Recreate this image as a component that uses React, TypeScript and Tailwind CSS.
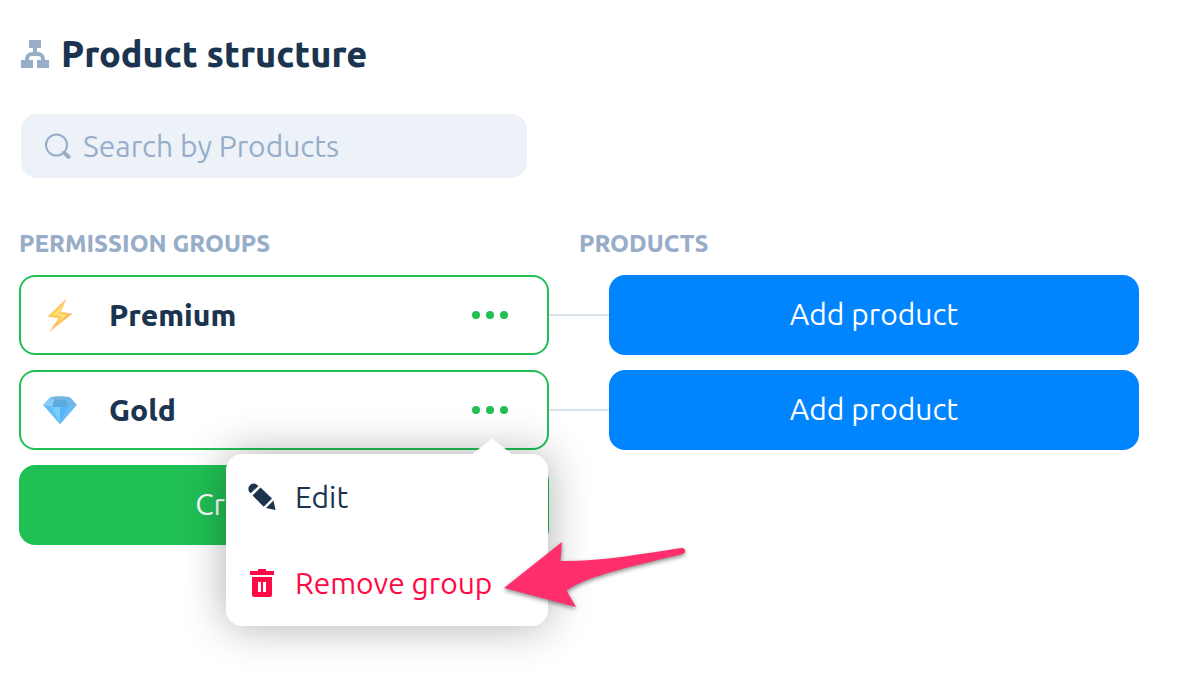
import React from "react";

function StructureIcon() {
  return (
    <svg width="28" height="28" viewBox="0 0 28 28" fill="#97adc8" aria-hidden="true">
      <rect x="8" y="0" width="12" height="8" />
      <rect x="12" y="7" width="4" height="7" />
      <path d="M4 20v-1a7 7 0 0 1 7-7h6a7 7 0 0 1 7 7v1h-4v-1a3 3 0 0 0-3-3h-6a3 3 0 0 0-3 3v1z" />
      <rect x="0" y="20" width="12" height="8" />
      <rect x="16" y="20" width="12" height="8" />
    </svg>
  );
}

function SearchIcon() {
  return (
    <svg width="26" height="26" viewBox="0 0 26 26" fill="none" stroke="#97adc8" strokeLinecap="round" aria-hidden="true">
      <circle cx="11.500" cy="12" r="10.500" strokeWidth="2" />
      <path d="M18 19l2 2" strokeWidth="2" />
      <path d="M20.500 21l3 2.800" strokeWidth="4" />
    </svg>
  );
}

function BoltIcon() {
  return (
    <svg width="36" height="36" viewBox="0 0 36 36" aria-hidden="true">
      <defs>
        <linearGradient id="bolt" x1="0" y1="0" x2="0.6" y2="1">
          <stop offset="0" stopColor="#fcb968" />
          <stop offset="0.45" stopColor="#ffcf45" />
          <stop offset="1" stopColor="#f9a84c" />
        </linearGradient>
      </defs>
      <path d="M24 2L6 19.500l11 1.500L8 34l22-17-11.500-2z" fill="url(#bolt)" stroke="#fcd2a4" strokeWidth="1" strokeLinejoin="round" />
      <path d="M21 8l-10 10 9 1.500-5 7 10-8.500-8-1.500z" fill="#ffe27a" />
    </svg>
  );
}

function DiamondIcon() {
  return (
    <svg width="36" height="36" viewBox="0 0 36 36" aria-hidden="true">
      <path d="M8 5.500q10-2 20 0L34.500 13 18 32 1.500 13z" fill="#62bdf6" stroke="#a8dcf8" strokeLinejoin="round" />
      <path d="M8 5.500q10-2 20 0L24 8H12z" fill="#76b4de" />
      <path d="M12 8h12l2 7H10z" fill="#5aa9e0" />
      <path d="M8 5.500L12 8l-2 7-8.500-2z" fill="#8acbf4" />
      <path d="M28 5.500L24 8l2 7 8.500-2z" fill="#6db6ea" />
      <path d="M1.500 13L10 15l8 17z" fill="#62bdf5" />
      <path d="M10 15h8v17z" fill="#79ccfb" />
      <path d="M18 15h8l-8 17z" fill="#55b5f8" />
      <path d="M26 15l8.500-2L18 32z" fill="#66bdf7" />
    </svg>
  );
}

function PencilIcon() {
  return (
    <svg width="28" height="28" viewBox="0 0 28 28" fill="#1b344f" aria-hidden="true">
      <path d="M2.700 10.300L1.800 9.400A4.900 4.900 0 0 1 1.800 2.400a4.900 4.900 0 0 1 7-.6L10.500 3z" />
      <path d="M12.500 4.500L24 15.500 15.700 23.700 4.500 12.500z" />
      <path d="M25.500 17.500L27.500 27 18 25z" />
    </svg>
  );
}

function TrashIcon() {
  return (
    <svg width="28" height="28" viewBox="0 0 28 28" fill="#ff0a45" aria-hidden="true">
      <path d="M10 0h8v2h8v4H2V2h8z" />
      <path fillRule="evenodd" d="M4 8h20v18a2 2 0 0 1-2 2H6a2 2 0 0 1-2-2zM10 13v10h3V13zM15 13v10h3V13z" />
    </svg>
  );
}

function PointerArrow() {
  return (
    <svg
      className="pointer-events-none absolute top-[86px] left-[276px] overflow-visible drop-shadow-[0_2px_2px_rgba(0,0,0,0.45)]"
      width="184"
      height="70"
      viewBox="0 0 184 70"
      aria-hidden="true"
    >
      <path
        d="M2 48L60 2L58.500 21C95 22 140 14 179 8C184 7.500 184.500 13 180.500 14C140 24 84 36 64.500 50.500L74 67Z"
        fill="#ff2f6d"
      />
    </svg>
  );
}

function GroupMenu() {
  return (
    <div
      role="menu"
      className="absolute top-[82px] -right-px z-10 w-[322px] rounded-2xl bg-white shadow-[0_0_44px_rgba(0,0,0,0.32)]"
    >
      <svg className="absolute -top-4 right-9" width="40" height="17" viewBox="0 0 40 17" fill="#fff" aria-hidden="true">
        <path d="M0 16.500L19 1q1-1 2 0L40 16.500z" />
      </svg>
      <button type="button" role="menuitem" className="flex h-[86px] w-full items-center gap-[19px] pl-[22px] text-3xl text-[#1b344f]">
        <PencilIcon />
        Edit
      </button>
      <button type="button" role="menuitem" className="flex h-[86px] w-full items-center gap-[19px] pl-[22px] text-3xl text-[#ff0a45]">
        <TrashIcon />
        Remove group
      </button>
      <PointerArrow />
    </div>
  );
}

type Group = { name: string; icon: React.ReactNode; open: boolean };

const groups: Group[] = [
  { name: "Premium", icon: <BoltIcon />, open: false },
  { name: "Gold", icon: <DiamondIcon />, open: true },
];

function GroupRow({ name, icon, open }: Group) {
  return (
    <li className="grid grid-cols-[1fr_60px_1fr] items-center">
      <div className="relative flex h-20 items-center rounded-2xl border-2 border-[#21c055] pr-[39px] pl-[21px]">
        {icon}
        <span className="ml-[31px] flex-1 text-3xl font-extrabold text-[#1b344f]">{name}</span>
        <button type="button" aria-label={`${name} actions`} aria-haspopup="menu" aria-expanded={open}>
          <svg width="36" height="8" viewBox="0 0 36 8" fill="#21c055" aria-hidden="true">
            <circle cx="4" cy="4" r="4" />
            <circle cx="18" cy="4" r="4" />
            <circle cx="32" cy="4" r="4" />
          </svg>
        </button>
        {open && <GroupMenu />}
      </div>
      <div className="h-0.5 bg-[#d9e3ec]" />
      <button type="button" className="h-20 rounded-2xl bg-[#0085ff] pb-0.5 text-3xl text-white">
        Add product
      </button>
    </li>
  );
}

export default function App() {
  return (
    <main className="min-h-screen bg-white pt-8 pr-[51px] pl-[19px] font-['Ubuntu','Noto_Sans',sans-serif]">
      <h1 className="flex h-11 items-center gap-3 pl-0.5 text-4xl font-extrabold text-[#1b344f]">
        <StructureIcon />
        Product structure
      </h1>

      <label className="mt-[38px] ml-0.5 flex h-16 max-w-[506px] items-center gap-3 rounded-2xl bg-[#edf2f9] px-6">
        <SearchIcon />
        <input
          type="text"
          aria-label="Search by Products"
          placeholder="Search by Products"
          className="h-full min-w-0 flex-1 bg-transparent text-3xl text-[#1b344f] outline-none placeholder:text-[#97adc8]"
        />
      </label>

      <div className="mt-12 grid h-9 grid-cols-2 items-center text-2xl font-extrabold text-[#97adc8]">
        <h2>PERMISSION GROUPS</h2>
        <h2>PRODUCTS</h2>
      </div>

      <ul className="mt-[13px] flex flex-col gap-[15px]">
        {groups.map((group) => (
          <GroupRow key={group.name} {...group} />
        ))}
        <li className="grid grid-cols-[1fr_60px_1fr]">
          <button type="button" className="h-20 rounded-2xl bg-[#21c055] pb-0.5 text-3xl text-white">
            Create group
          </button>
        </li>
      </ul>
    </main>
  );
}
